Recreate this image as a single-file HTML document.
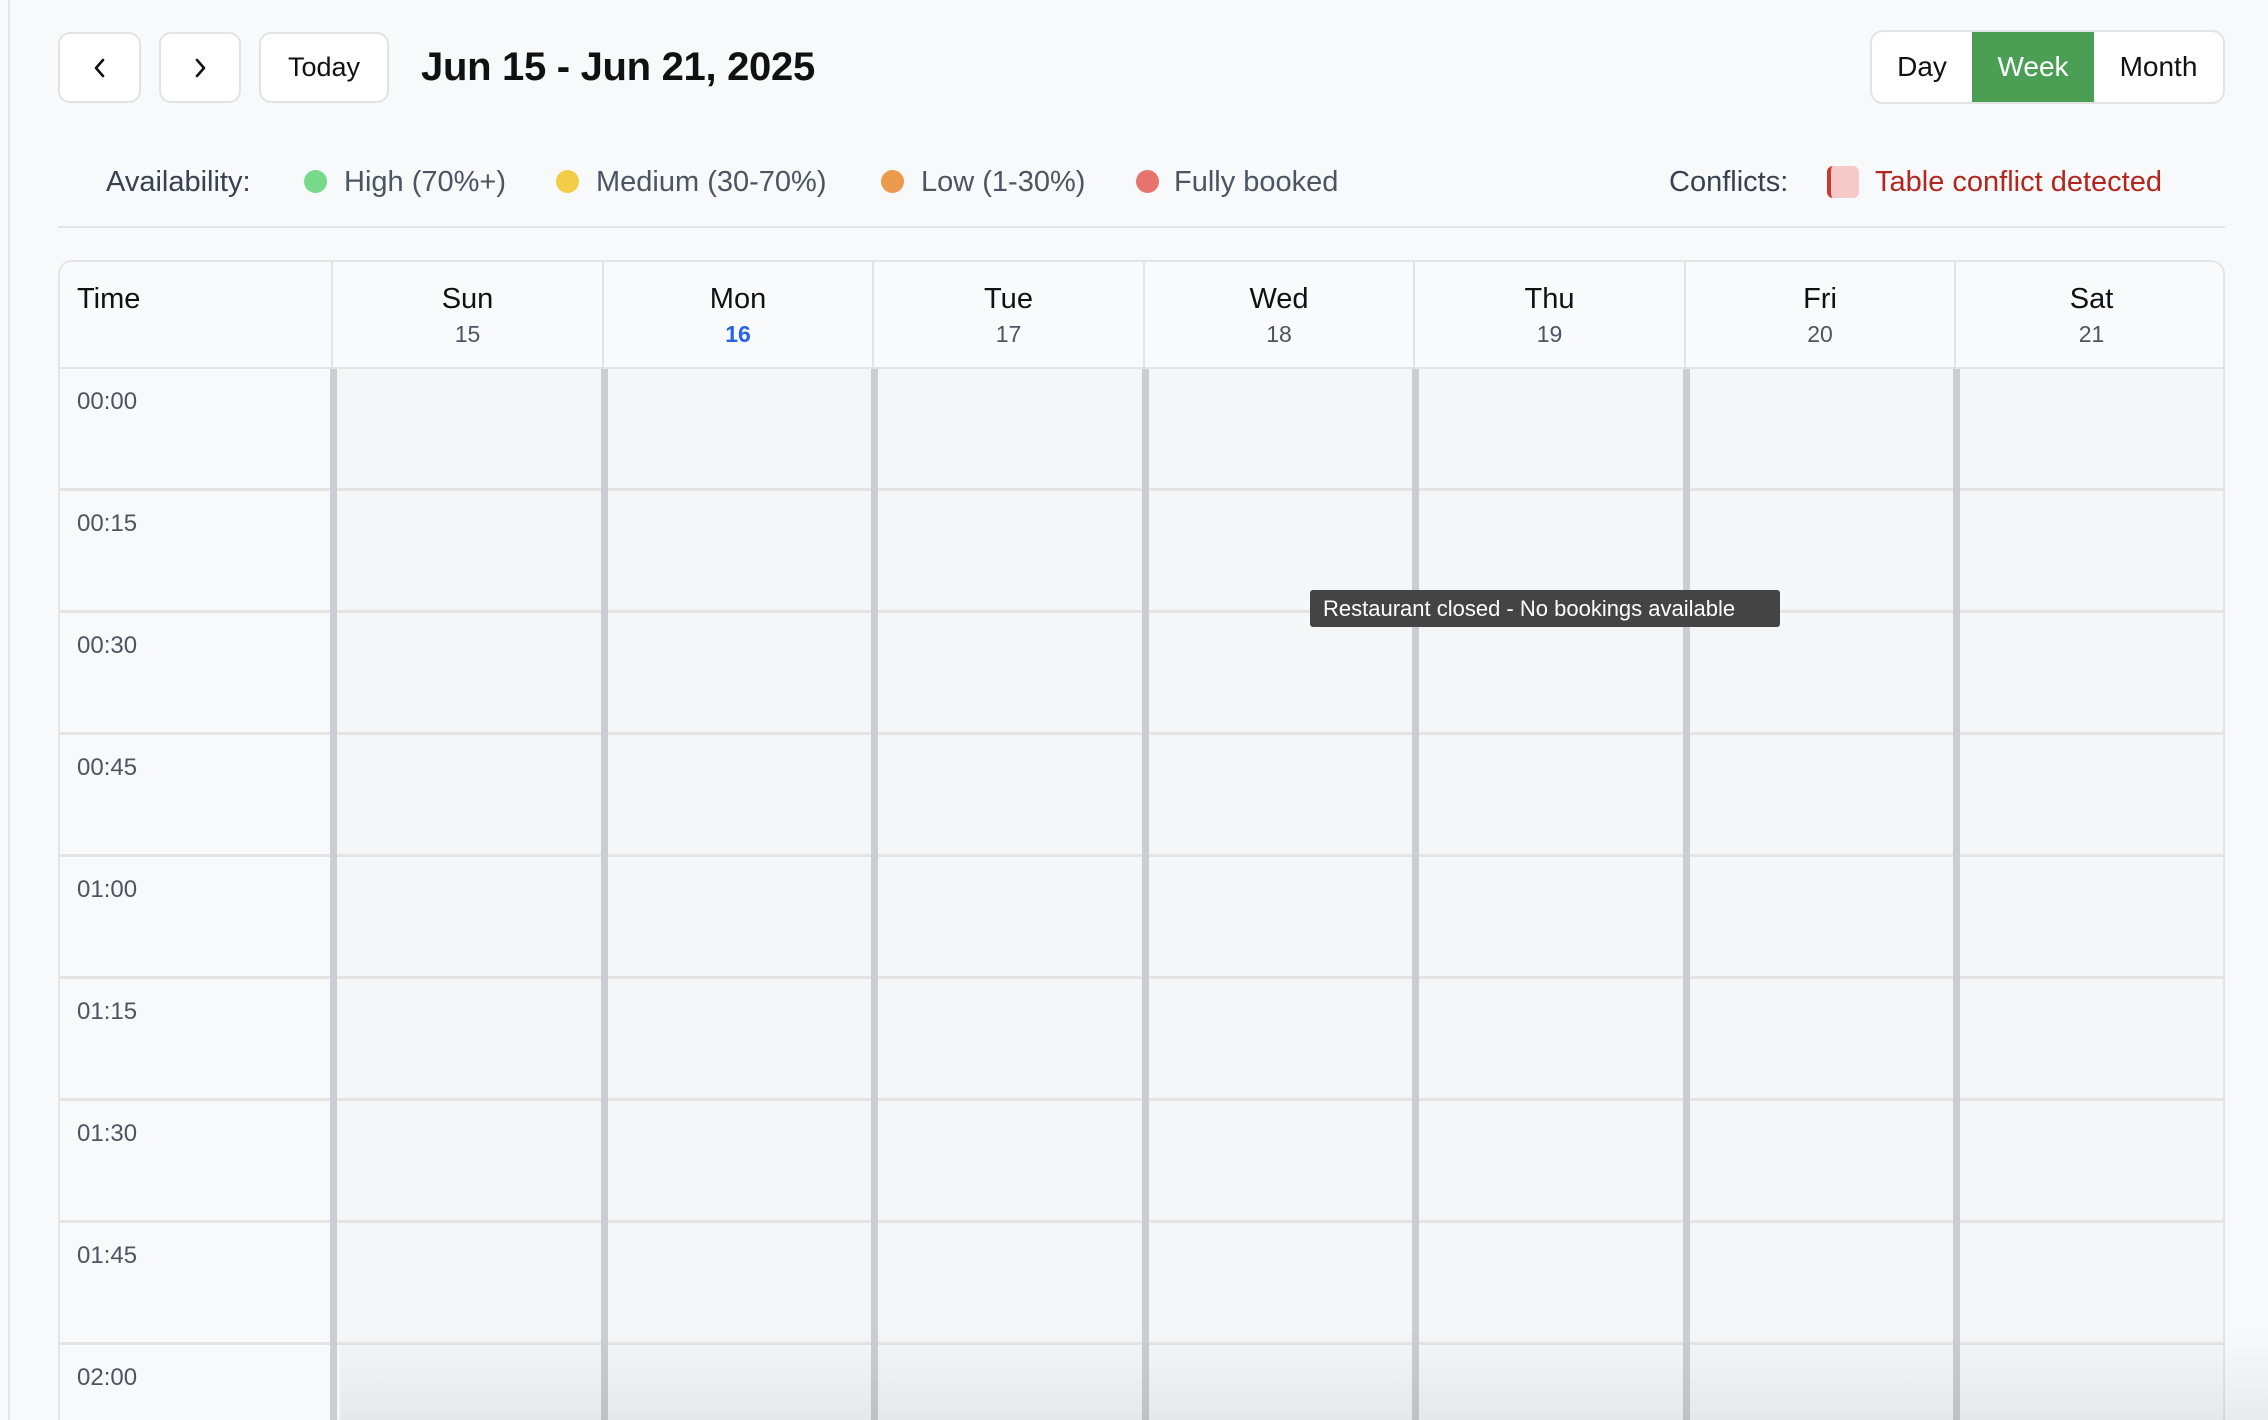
<!DOCTYPE html>
<html style="width:2268px;height:1420px;overflow:hidden"><head><meta charset="utf-8"><style>
*{box-sizing:border-box;margin:0;padding:0}
body{width:2268px;height:1420px;overflow:hidden;background:#f8f9fa;font-family:"Liberation Sans",Arial,sans-serif;position:relative;color:#111}
.vl{position:absolute;left:8px;top:0;width:2px;height:1420px;background:#e6e6e6}
.btn{position:absolute;top:32px;height:71px;background:#fff;border:2px solid #e3e3e3;border-radius:12px;display:flex;align-items:center;justify-content:center;font-size:27px;color:#111}
.title{position:absolute;left:421px;top:45px;font-size:40px;font-weight:700;color:#111;letter-spacing:-0.3px}
.seg{position:absolute;left:1870px;top:30px;width:355px;height:74px;border:2px solid #e3e3e3;border-radius:13px;background:#fff;overflow:hidden;display:flex}
.seg div{display:flex;align-items:center;justify-content:center;font-size:28px;color:#111}
.legend{position:absolute;top:164px;font-size:29px;color:#4b5563;white-space:nowrap;line-height:36px}
.dot{position:absolute;top:170px;width:23px;height:23px;border-radius:50%}
.divider{position:absolute;left:58px;top:226px;width:2167px;height:2px;background:#e6e4e2}
.grid{position:absolute;left:58px;top:260px;width:2167px;height:1160px;border:2px solid #e6e4e2;border-bottom:none;border-radius:14px 14px 0 0;overflow:hidden;background:#f5f6f8}
.hdr{position:absolute;top:0;height:107px;background:#f9fafb;border-right:2px solid #e6e4e2;border-bottom:2px solid #e6e4e2;text-align:center}
.dn{font-size:29px;color:#111;margin-top:20px;line-height:34px}
.dd{font-size:23px;color:#4b5563;margin-top:5px}
.tcell{position:absolute;left:0;width:273px;height:122px;border-bottom:3px solid #e6e4e2;border-right:2px solid #e6e4e2;background:#f8f9fa;font-size:24px;color:#4b5563;padding:19px 0 0 17px}
.col{position:absolute;top:107px;height:1100px;width:7px;background:#cbcdd2}
.rl{position:absolute;left:273px;right:0;height:3px;background:#e6e4e2}
.tip{position:absolute;left:1310px;top:590px;width:470px;height:37px;background:#444;border-radius:3px;color:#fff;font-size:22px;line-height:37px;padding-left:13px;white-space:nowrap}
.shade{position:absolute;left:340px;right:0;top:1330px;height:90px;background:linear-gradient(to bottom,rgba(0,0,0,0),rgba(0,0,0,0.06))}
</style></head><body>
<div class="vl"></div>
<div class="btn" style="left:58px;width:83px"><svg width="20" height="22" viewBox="0 0 20 22"><path d="M13 3 L6 11 L13 19" fill="none" stroke="#111" stroke-width="2.6" stroke-linecap="round" stroke-linejoin="round"/></svg></div>
<div class="btn" style="left:159px;width:82px"><svg width="20" height="22" viewBox="0 0 20 22"><path d="M7 3 L14 11 L7 19" fill="none" stroke="#111" stroke-width="2.6" stroke-linecap="round" stroke-linejoin="round"/></svg></div>
<div class="btn" style="left:259px;width:130px">Today</div>
<div class="title">Jun 15 - Jun 21, 2025</div>
<div class="seg"><div style="width:100px">Day</div><div style="width:122px;background:#4a9f55;color:#fff">Week</div><div style="flex:1">Month</div></div>

<div class="legend" style="left:106px;color:#374151">Availability:</div>
<div class="dot" style="left:304px;background:#77d98a"></div><div class="legend" style="left:344px">High (70%+)</div>
<div class="dot" style="left:556px;background:#f2cd47"></div><div class="legend" style="left:596px">Medium (30-70%)</div>
<div class="dot" style="left:881px;background:#ec9a4e"></div><div class="legend" style="left:921px">Low (1-30%)</div>
<div class="dot" style="left:1136px;background:#e6736c"></div><div class="legend" style="left:1174px">Fully booked</div>
<div class="legend" style="left:1669px;color:#374151">Conflicts:</div>
<div style="position:absolute;left:1827px;top:166px;width:32px;height:32px;border-radius:6px;background:#f7caca;border-left:4px solid #c83a32"></div>
<div class="legend" style="left:1875px;color:#b3261e">Table conflict detected</div>
<div class="divider"></div>

<div class="grid">
<div class="hdr" style="left:0;width:273px;text-align:left;padding-left:17px"><div class="dn">Time</div></div>
<div class="hdr" style="left:273px;width:271px"><div class="dn">Sun</div><div class="dd">15</div></div>
<div class="hdr" style="left:544px;width:270px"><div class="dn">Mon</div><div class="dd" style="color:#2563eb;font-weight:700">16</div></div>
<div class="hdr" style="left:814px;width:271px"><div class="dn">Tue</div><div class="dd">17</div></div>
<div class="hdr" style="left:1085px;width:270px"><div class="dn">Wed</div><div class="dd">18</div></div>
<div class="hdr" style="left:1355px;width:271px"><div class="dn">Thu</div><div class="dd">19</div></div>
<div class="hdr" style="left:1626px;width:270px"><div class="dn">Fri</div><div class="dd">20</div></div>
<div class="hdr" style="left:1896px;width:271px;border-right:none"><div class="dn">Sat</div><div class="dd">21</div></div>

<div class="tcell" style="top:107px">00:00</div>
<div class="tcell" style="top:229px">00:15</div>
<div class="tcell" style="top:351px">00:30</div>
<div class="tcell" style="top:473px">00:45</div>
<div class="tcell" style="top:595px">01:00</div>
<div class="tcell" style="top:717px">01:15</div>
<div class="tcell" style="top:839px">01:30</div>
<div class="tcell" style="top:961px">01:45</div>
<div class="tcell" style="top:1083px">02:00</div>

<div class="rl" style="top:226px"></div><div class="rl" style="top:348px"></div><div class="rl" style="top:470px"></div><div class="rl" style="top:592px"></div><div class="rl" style="top:714px"></div><div class="rl" style="top:836px"></div><div class="rl" style="top:958px"></div><div class="rl" style="top:1080px"></div>

<div class="col" style="left:270px"></div>
<div class="col" style="left:541px"></div>
<div class="col" style="left:811px"></div>
<div class="col" style="left:1082px"></div>
<div class="col" style="left:1352px"></div>
<div class="col" style="left:1623px"></div>
<div class="col" style="left:1893px"></div>
</div>
<div class="shade"></div>
<div class="tip">Restaurant closed - No bookings available</div>
</body></html>
